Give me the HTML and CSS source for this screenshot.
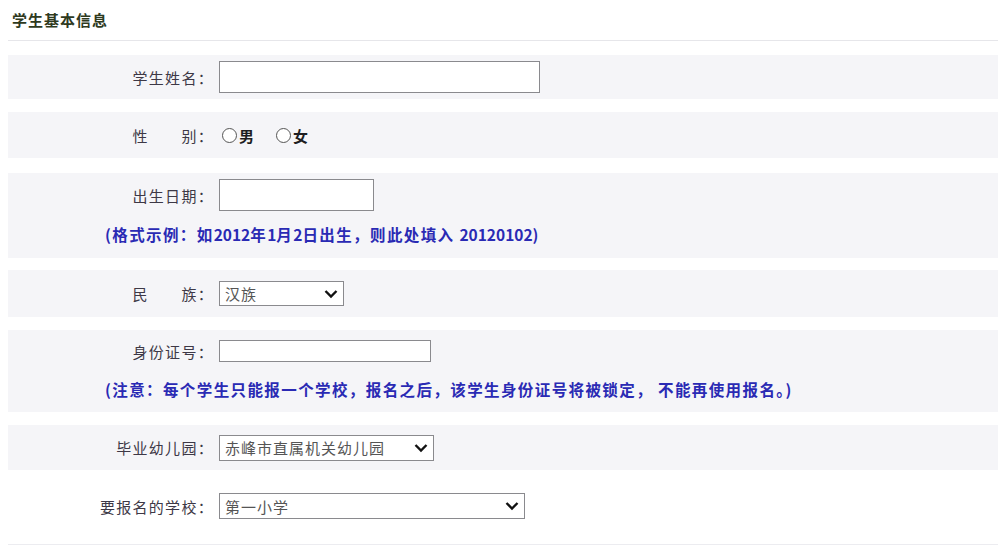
FILE: index.html
```html
<!DOCTYPE html>
<html lang="zh-CN">
<head>
    <meta charset="UTF-8">
    <title>学生基本信息</title>
    <link rel="stylesheet" href="styles.css">
</head>
<body>
    <div class="container">
        <div class="title">学生基本信息</div>

        <div class="row row-name">
            <label class="label">学生姓名：</label>
            <div class="field"><input type="text" class="input input-name"></div>
        </div>

        <div class="row row-sex">
            <label class="label">性&emsp;&emsp;别：</label>
            <div class="field">
                <label class="radio"><input type="radio" name="sex" value="男">男</label>
                <label class="radio"><input type="radio" name="sex" value="女">女</label>
            </div>
        </div>

        <div class="row row-birth with-note">
            <label class="label">出生日期：</label>
            <div class="field"><input type="text" class="input input-birth"></div>
            <div class="note">(格式示例：如<span class="num">2012</span>年<span class="num">1</span>月<span class="num">2</span>日出生，则此处填入 <span class="num">20120102</span>)</div>
        </div>

        <div class="row row-nation">
            <label class="label">民&emsp;&emsp;族：</label>
            <div class="field">
                <span class="select-wrap">
                    <select class="select select-nation">
                        <option>汉族</option>
                        <option>蒙古族</option>
                        <option>满族</option>
                    </select>
                    <svg class="chevron" viewBox="0 0 14 10" width="14" height="10"><path d="M1.5 2 L7 7.5 L12.5 2" fill="none" stroke="#111" stroke-width="2.4"/></svg>
                </span>
            </div>
        </div>

        <div class="row row-id with-note">
            <label class="label">身份证号：</label>
            <div class="field"><input type="text" class="input input-id"></div>
            <div class="note">(注意：每个学生只能报一个学校，报名之后，该学生身份证号将被锁定， 不能再使用报名。)</div>
        </div>

        <div class="row row-kg">
            <label class="label">毕业幼儿园：</label>
            <div class="field">
                <span class="select-wrap">
                    <select class="select select-kg">
                        <option>赤峰市直属机关幼儿园</option>
                    </select>
                    <svg class="chevron" viewBox="0 0 14 10" width="14" height="10"><path d="M1.5 2 L7 7.5 L12.5 2" fill="none" stroke="#111" stroke-width="2.4"/></svg>
                </span>
            </div>
        </div>

        <div class="row row-school plain">
            <label class="label">要报名的学校：</label>
            <div class="field">
                <span class="select-wrap">
                    <select class="select select-school">
                        <option>第一小学</option>
                        <option>第二小学</option>
                    </select>
                    <svg class="chevron" viewBox="0 0 14 10" width="14" height="10"><path d="M1.5 2 L7 7.5 L12.5 2" fill="none" stroke="#111" stroke-width="2.4"/></svg>
                </span>
            </div>
        </div>
    </div>
</body>
</html>
```

FILE: styles.css
```css
body {
    margin: 0;
    padding: 0;
    background: #fff;
    font-family: "Noto Sans CJK SC", "Noto Sans", sans-serif;
    font-size: 15px;
    color: #3d3846;
}
.container {
    width: 990px;
    margin: 0 0 0 8px;
    border-bottom: 1px solid #ececf0;
    min-height: 545px;
    box-sizing: border-box;
}
.title {
    height: 40px;
    line-height: 40px;
    padding-left: 4px;
    font-size: 15px;
    letter-spacing: 1px;
    font-weight: bold;
    color: #2e3a1e;
    border-bottom: 1px solid #e6e6ea;
    margin-bottom: 14px;
}
.row {
    display: grid;
    grid-template-columns: 206px 1fr;
    column-gap: 5px;
    align-items: center;
    align-content: center;
    background: #f5f5f8;
    margin-bottom: 13px;
    box-sizing: border-box;
}
.row.with-note {
    align-content: start;
}
.row.plain {
    background: #fff;
}
.label {
    text-align: right;
    white-space: nowrap;
    letter-spacing: 1.3px;
}
.field {
    display: flex;
    align-items: center;
}
.note {
    grid-column: 1 / 3;
    padding-left: 97px;
    color: #2a2ab4;
    font-weight: bold;
    font-size: 15.5px;
    letter-spacing: 1.4px;
    line-height: 20px;
}
.note .num {
    letter-spacing: 0;
}
.input {
    box-sizing: border-box;
    border: 1px solid #8a8a8e;
    background: #fff;
    padding: 0 4px;
    font: inherit;
    margin: 0;
}
.row-name { height: 44px; }
.input-name { width: 321px; height: 32px; }
.row-sex { height: 46px; margin-bottom: 15px; }
.row-birth { height: 85px; padding-top: 6px; margin-bottom: 12px; }
.input-birth { width: 155px; height: 32px; }
.row-birth .note { margin-top: 13px; }
.row-nation { height: 47px; }
.row-id { height: 82px; padding-top: 10px; }
.input-id { width: 212px; height: 22px; }
.row-id .note { margin-top: 17px; }
.row-kg { height: 45px; margin-bottom: 12px; }
.row-school { height: 48px; }

.radio {
    display: inline-flex;
    align-items: center;
    margin-right: 19px;
    color: #1e1e22;
    font-weight: bold;
}
.radio input {
    appearance: none;
    -webkit-appearance: none;
    width: 15px;
    height: 15px;
    margin: 0 2px 0 3px;
    border: 1px solid #555;
    border-radius: 50%;
    background: #fff;
}
.select-wrap {
    position: relative;
    display: inline-block;
}
.select {
    appearance: none;
    -webkit-appearance: none;
    box-sizing: border-box;
    border: 1px solid #8a8a8e;
    background: #fff;
    font: inherit;
    letter-spacing: 1px;
    color: #555;
    padding: 0 24px 0 5px;
    margin: 0;
    display: block;
}
.chevron {
    position: absolute;
    right: 6px;
    top: 50%;
    margin-top: -5px;
    pointer-events: none;
}
.select-nation { width: 125px; height: 25px; }
.select-kg { width: 215px; height: 26px; }
.select-school { width: 306px; height: 26px; }
```
